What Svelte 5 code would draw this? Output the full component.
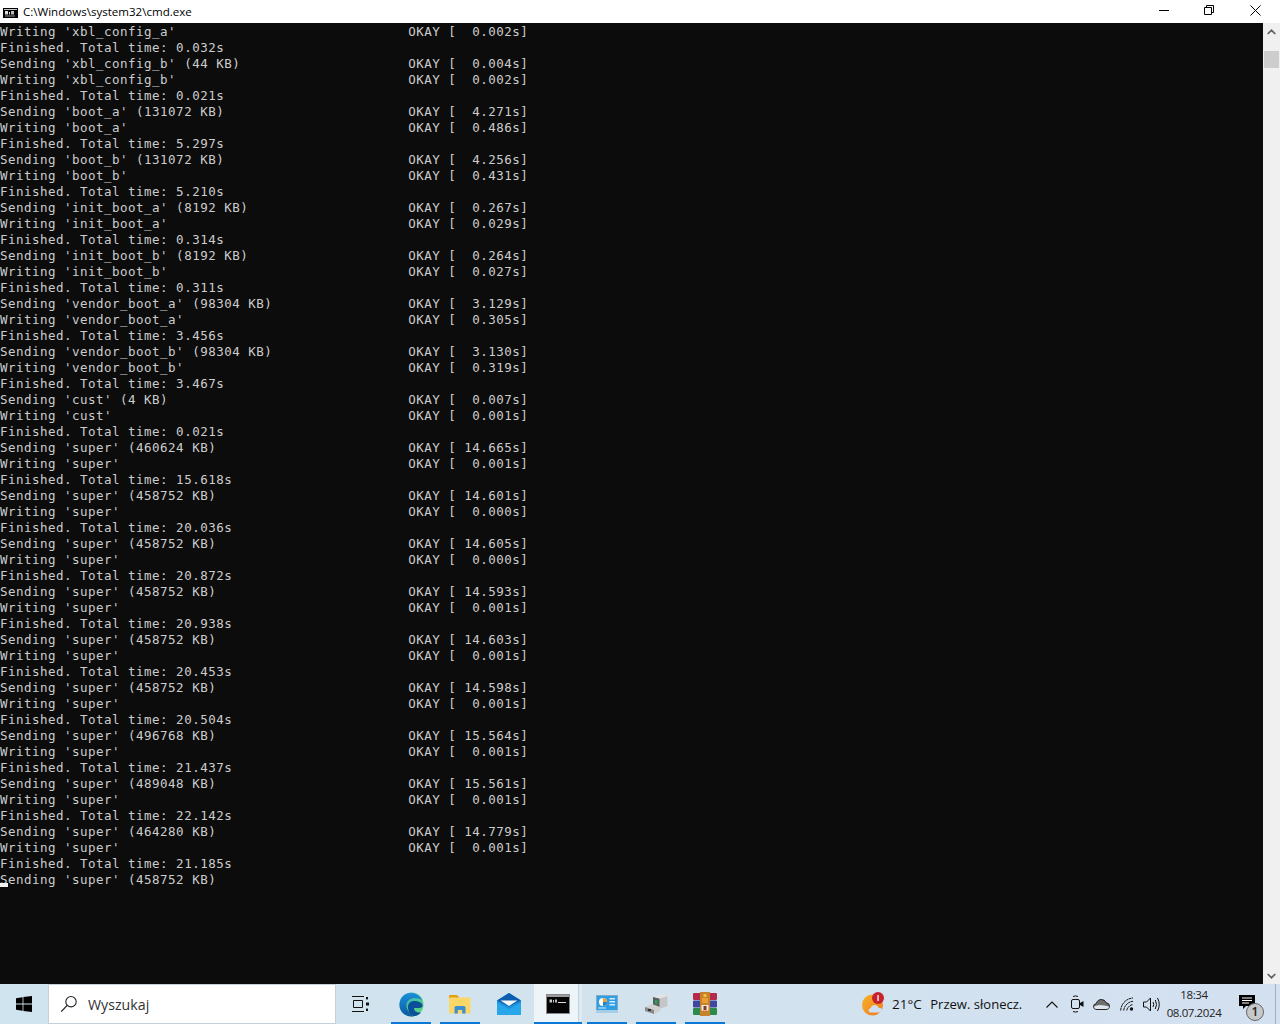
<script>
  const S = (name, kb, t) => [`Sending '${name}' (${kb} KB)`, t];
  const W = (name, t) => [`Writing '${name}'`, t];
  const F = (t) => [`Finished. Total time: ${t}s`];
  const rows = [
    W('xbl_config_a', ' 0.002'), F('0.032'),
    S('xbl_config_b', 44, ' 0.004'), W('xbl_config_b', ' 0.002'), F('0.021'),
    S('boot_a', 131072, ' 4.271'), W('boot_a', ' 0.486'), F('5.297'),
    S('boot_b', 131072, ' 4.256'), W('boot_b', ' 0.431'), F('5.210'),
    S('init_boot_a', 8192, ' 0.267'), W('init_boot_a', ' 0.029'), F('0.314'),
    S('init_boot_b', 8192, ' 0.264'), W('init_boot_b', ' 0.027'), F('0.311'),
    S('vendor_boot_a', 98304, ' 3.129'), W('vendor_boot_a', ' 0.305'), F('3.456'),
    S('vendor_boot_b', 98304, ' 3.130'), W('vendor_boot_b', ' 0.319'), F('3.467'),
    S('cust', 4, ' 0.007'), W('cust', ' 0.001'), F('0.021'),
    S('super', 460624, '14.665'), W('super', ' 0.001'), F('15.618'),
    S('super', 458752, '14.601'), W('super', ' 0.000'), F('20.036'),
    S('super', 458752, '14.605'), W('super', ' 0.000'), F('20.872'),
    S('super', 458752, '14.593'), W('super', ' 0.001'), F('20.938'),
    S('super', 458752, '14.603'), W('super', ' 0.001'), F('20.453'),
    S('super', 458752, '14.598'), W('super', ' 0.001'), F('20.504'),
    S('super', 496768, '15.564'), W('super', ' 0.001'), F('21.437'),
    S('super', 489048, '15.561'), W('super', ' 0.001'), F('22.142'),
    S('super', 464280, '14.779'), W('super', ' 0.001'), F('21.185'),
  ];
  const lines = rows.map(([l, t]) => (t ? l.padEnd(51, ' ') + `OKAY [ ${t}s]` : l));
</script>

<div class="window">
  <header class="titlebar">
    <svg class="appicon" width="15" height="10" viewBox="0 0 15 10">
      <rect width="15" height="10" fill="#000"/>
      <rect x="1" y="1" width="13" height="1" fill="#c8c8c8"/>
      <rect x="2" y="3" width="3" height="3.500" fill="#ddd"/>
      <rect x="6" y="4" width="1" height="2.500" fill="#ddd"/>
      <rect x="8" y="3" width="3" height="3.500" fill="#bbb"/>
      <rect x="2" y="7.500" width="10" height="1" fill="#999"/>
    </svg>
    <span class="title">C:\Windows\system32\cmd.exe</span>
    <div class="controls">
      <button class="ctl" aria-label="Minimize"><svg width="10" height="10" viewBox="0 0 10 10"><path d="M0 5.500h10" stroke="#000" fill="none"/></svg></button>
      <button class="ctl narrow" aria-label="Restore"><svg width="10" height="10" viewBox="0 0 10 10"><path d="M2.500 2.500V.5h7v7h-2M.5 2.500h7v7h-7z" stroke="#000" fill="none"/></svg></button>
      <button class="ctl" aria-label="Close"><svg width="11" height="11" viewBox="0 0 11 11"><path d="M.5.5l10 10M10.500.5l-10 10" stroke="#000" fill="none"/></svg></button>
    </div>
  </header>

  <main class="body">
    <div class="console">
      {#each lines as line}
        <div class="line">{line}</div>
      {/each}
      <div class="line current">Sending 'super' (458752 KB)<span class="cursor"></span></div>
    </div>
    <div class="scrollbar">
      <div class="arrow"><svg width="9" height="6" viewBox="0 0 9 6"><path d="M.7 5L4.500 1.300 8.300 5" stroke="#606060" stroke-width="1.700" fill="none"/></svg></div>
      <div class="thumb"></div>
      <div class="arrow bottom"><svg width="9" height="6" viewBox="0 0 9 6"><path d="M.7 1L4.500 4.700 8.300 1" stroke="#606060" stroke-width="1.700" fill="none"/></svg></div>
    </div>
  </main>

  <footer class="taskbar">
    <div class="start">
      <svg width="16" height="16" viewBox="0 0 16 16"><path fill="#000" d="M0 2.200L6.600 1.200V7.600H0zM7.400 1.100L16 0V7.600H7.400zM0 8.400H6.600V14.800L0 13.800zM7.400 8.400H16V16L7.400 14.900z"/></svg>
    </div>
    <div class="search">
      <svg width="18" height="18" viewBox="0 0 18 18"><circle cx="11" cy="6.700" r="5.200" fill="none" stroke="#222" stroke-width="1.100"/><path d="M7.200 10.400L1.200 16.600" stroke="#222" stroke-width="1.300"/></svg>
      <span>Wyszukaj</span>
    </div>
    <div class="taskview">
      <svg width="17" height="16" viewBox="0 0 17 16"><path d="M0 .5h12M0 15.500h12M1.500 4.500h9v7h-9z" fill="none" stroke="#111"/><rect x="14" y="1" width="2" height="2.400" fill="#111"/><rect x="14" y="6.500" width="3" height="3" fill="#111"/><rect x="14" y="12.600" width="2" height="2.400" fill="#111"/></svg>
    </div>
    <div class="apps">
      <div class="slot run">
        <svg width="25" height="25" viewBox="0 0 25 25">
          <defs>
            <linearGradient id="eg" x1="0" y1="0" x2="1" y2="1"><stop offset="0" stop-color="#2fa8d8"/><stop offset="1" stop-color="#62dc6c"/></linearGradient>
            <linearGradient id="eb" x1="0" y1="0" x2="0" y2="1"><stop offset="0" stop-color="#1a8fd8"/><stop offset="1" stop-color="#0c59a4"/></linearGradient>
          </defs>
          <circle cx="12.500" cy="12.500" r="12" fill="url(#eg)"/>
          <path d="M.5 12.500C1 5 6 1 12 1c5 0 9 3 11 7-3-2-9-3-13 0-4 3-3 8 0 12 1 2 3 4 5 4.300-8 1.500-15-4-14.500-12z" fill="url(#eb)"/>
          <path d="M9 15c0-4 3-6 6.500-6 3.500 0 8 1.500 8 4.500 0 1.800-1.500 2.500-3.500 2.500h-5c0 3 2.500 5 7 4.500-2 2.500-5 4-7.500 3.500C11 23 9 19 9 15z" fill="#0a4f97"/>
        </svg>
      </div>
      <div class="slot run">
        <svg width="22" height="20" viewBox="0 0 22 20">
          <path d="M0 2q0-1 1-1h7l2 2v3H0z" fill="#e0a012"/>
          <rect y="3.500" width="21.500" height="16" rx="1" fill="#fbd768"/>
          <path d="M5.500 19.500v-6q0-1.500 1.500-1.500h8q1.500 0 1.500 1.500v6h-3.300v-3.500H8.800v3.500z" fill="#3f8fd0"/>
        </svg>
      </div>
      <div class="slot">
        <svg width="24" height="23" viewBox="0 0 24 23">
          <path d="M12 0L24 7.500V22H0V7.500z" fill="#1d8fdb"/>
          <path d="M12 0L24 7.500l-12 6-12-6z" fill="#0b5fae"/>
          <path d="M3.500 7.500h17L12 13z" fill="#f4f8fb"/>
          <path d="M0 9.500l12 6.500 12-6.500V22H0z" fill="#27a6ea"/>
        </svg>
      </div>
      <div class="slot run active">
        <svg width="24" height="20" viewBox="0 0 24 20">
          <rect x=".5" y=".5" width="23" height="19" fill="#050505" stroke="#888"/>
          <rect x="1" y="1" width="22" height="2" fill="#9c9c9c"/>
          <rect x="3.500" y="5.500" width="2.500" height="3" fill="#ccc"/>
          <rect x="7" y="6" width="1" height="2.500" fill="#ccc"/>
          <rect x="9" y="5.500" width="2" height="3" fill="#bbb"/>
          <rect x="12" y="8" width="8" height="1" fill="#ddd"/>
        </svg>
      </div>
      <div class="slot run">
        <svg width="22" height="18" viewBox="0 0 22 18">
          <rect x=".5" y=".5" width="21" height="15" fill="#2f9fe4" stroke="#7fa9c8"/>
          <rect y="15" width="22" height="3" fill="#a6cfe6"/>
          <circle cx="7" cy="7" r="4" fill="#fff"/>
          <path d="M7 7V3a4 4 0 0 1 4 4z" fill="#f0a030"/>
          <path d="M7 7h4a4 4 0 0 1-4 4z" fill="#2f7fc4"/>
          <rect x="13.500" y="3" width="5.500" height="1.500" fill="#d8ecf8"/>
          <rect x="13.500" y="6" width="5.500" height="1.500" fill="#d8ecf8"/>
          <rect x="13.500" y="9" width="5.500" height="1.500" fill="#d8ecf8"/>
          <rect x="2" y="12.500" width="8" height="1" fill="#d8ecf8"/>
        </svg>
      </div>
      <div class="slot run">
        <svg width="23" height="20" viewBox="0 0 23 20">
          <path d="M8 3l10-3 4.500 2v10l-8 3z" fill="#e3e3e3"/>
          <path d="M8 3l7 1.800V15L8 13z" fill="#5a5f60"/>
          <path d="M14.500 4.500L22.500 2v10l-8 3z" fill="#c6c6c6"/>
          <rect x="10" y="6" width="2.500" height="4" fill="#2aa050"/>
          <path d="M0 13l7-3 8 3v4l-6 3-9-3z" fill="#d0d0d0"/>
          <path d="M0 13l9 3v4l-9-3z" fill="#8a8a8a"/>
          <rect x="3" y="15" width="3" height="2" fill="#333"/>
        </svg>
      </div>
      <div class="slot run">
        <svg width="24" height="24" viewBox="0 0 24 24">
          <rect x="0" y="1" width="24" height="7" rx="1" fill="#b32a4a"/>
          <rect x="0" y="8.500" width="24" height="7" rx="1" fill="#3f48a0"/>
          <rect x="0" y="16" width="24" height="7" rx="1" fill="#2c8a4a"/>
          <rect x="7" y="0" width="10" height="24" fill="#c8812c"/>
          <rect x="9" y="6" width="6" height="5" fill="#e8a030"/>
          <rect x="8.500" y="13" width="7" height="5.500" fill="#f0ece6"/>
          <rect x="10.500" y="14" width="3" height="4" fill="#8a3a20"/>
          <rect x="10.500" y="2" width="3" height="3" fill="#f0c040"/>
        </svg>
      </div>
    </div>
    <div class="spacer"></div>
    <div class="weather">
      <svg width="24" height="24" viewBox="0 0 24 24">
        <defs><linearGradient id="sun" x1="0" y1="0" x2="1" y2="1"><stop offset="0" stop-color="#f8b32a"/><stop offset="1" stop-color="#ee7a1c"/></linearGradient></defs>
        <circle cx="10.500" cy="13" r="10.500" fill="url(#sun)"/>
        <path d="M9 20.500q-2.500 0-2.500-2.200 0-2 2.300-2.200.8-3 3.800-3 3 0 3.900 2.700 3.500 0 3.500 2.400 0 2.300-3 2.300z" fill="#cfe0f4"/>
        <circle cx="16" cy="6" r="6" fill="#c8202c"/>
        <rect x="15.400" y="3" width="1.300" height="6" fill="#fff"/>
      </svg>
      <span class="temp">21°C</span>
      <span class="cond">Przew. słonecz.</span>
    </div>
    <div class="tray">
      <div class="ti"><svg width="12" height="7" viewBox="0 0 12 7"><path d="M.5 6.500L6 1l5.500 5.500" fill="none" stroke="#111" stroke-width="1.100"/></svg></div>
      <div class="ti"><svg width="13" height="18" viewBox="0 0 13 18"><path d="M2 1.500Q4.500.3 7 1.500M2 16.500q2.500 1.200 5 0" fill="none" stroke="#111"/><rect x=".5" y="4.500" width="8" height="9" rx="1.500" fill="none" stroke="#111"/><path d="M9 8l3.500-2v6L9 10z" fill="#111"/></svg></div>
      <div class="ti"><svg width="17" height="11" viewBox="0 0 17 11"><path d="M4 10.500Q.5 10.500.5 7.500 .5 5 3.200 4.700 4.500.5 8.500.5q3.500 0 4.500 3.200 3.500.3 3.500 3.500 0 3.300-3.500 3.300z" fill="#6e6e6e" stroke="#222"/><path d="M1 7.500q5-3 15 0 0 2.500-3 2.500H4Q1 10 1 7.500z" fill="#e0e6ee"/></svg></div>
      <div class="ti"><svg width="14" height="14" viewBox="0 0 14 14"><path d="M.7 13.500C1 7 6 1.500 13 1M3.700 13.500C4 9 8 4.700 13 4.300M6.800 13.500C7 11 9.500 8 13 7.500" fill="none" stroke="#111" stroke-width="1" stroke-dasharray="2.500 .5"/><circle cx="11.500" cy="12" r="1.700" fill="#111"/></svg></div>
      <div class="ti"><svg width="17" height="15" viewBox="0 0 17 15"><path d="M.5 5h3l4-4v13l-4-4h-3z" fill="none" stroke="#111"/><path d="M10 5q1.500 2.500 0 5M12.300 3q2.500 4.500 0 9M14.500 1q3.500 6.500 0 13" fill="none" stroke="#111"/></svg></div>
    </div>
    <div class="clock"><span>18:34</span><span>08.07.2024</span></div>
    <div class="notif">
      <svg width="16" height="14" viewBox="0 0 16 14"><path d="M0 0h16v11H7l-3 3v-3H0z" fill="#000"/><path d="M3 3h10M3 5.500h10M3 8h7" stroke="#fff"/></svg>
      <span class="badge">1</span>
    </div>
    <div class="desk"></div>
  </footer>
</div>

<style>
  :global(body) { margin: 0; background: #0c0c0c; overflow: hidden; }
  .window { width: 1280px; height: 1024px; display: flex; flex-direction: column; overflow: hidden; }
  .titlebar { height: 23px; background: #fff; display: flex; align-items: center; flex: none; }
  .appicon { margin-left: 3px; margin-right: 5px; margin-top: 2px; }
  .title { font: 11.55px "Open Sans", sans-serif; color: #000; }
  .controls { margin-left: auto; display: flex; height: 23px; margin-right: 2px; }
  .ctl { width: 46px; height: 23px; border: 0; padding: 0 0 3px; background: none; display: flex; align-items: center; justify-content: center; }
  .ctl.narrow { width: 45px; padding-right: 1px; }
  .body { flex: 1; display: flex; min-height: 0; background: #0c0c0c; }
  .console { flex: 1; padding-top: 1px; font-family: "DejaVu Sans Mono", monospace; font-size: 12.5px; letter-spacing: .48px; color: #cccccc; }
  .line { height: 16px; line-height: 16px; white-space: pre; position: relative; }
  .cursor { position: absolute; left: 0; top: 11px; width: 8px; height: 4px; background: #f2f2f2; }
  .scrollbar { width: 17px; background: #f0f0f0; display: flex; flex-direction: column; align-items: center; }
  .arrow { height: 17px; width: 17px; display: flex; align-items: center; justify-content: center; flex: none; }
  .arrow.bottom { margin-top: auto; }
  .thumb { width: 15px; height: 17px; margin-top: 11px; background: #cdcdcd; }
  .taskbar { height: 40px; flex: none; display: flex; align-items: stretch; background: linear-gradient(90deg, #cfe4ee 0%, #d2e3ee 45%, #d3e0f0 100%); font-family: "Open Sans", sans-serif; color: #111; }
  .start { width: 48px; display: flex; align-items: center; justify-content: center; }
  .search { width: 288px; box-sizing: border-box; background: #fff; border: 1px solid #c4cfd6; display: flex; align-items: center; padding-left: 11px; gap: 10px; font-size: 14.200px; color: #333; }
  .taskview { width: 48px; display: flex; align-items: center; justify-content: center; }
  .apps { display: flex; margin-left: 2.500px; }
  .slot { width: 49px; display: flex; align-items: center; justify-content: center; box-sizing: border-box; position: relative; }
  .slot.run::after { content: ""; position: absolute; left: 4.500px; right: 4.500px; bottom: 0; height: 2px; background: #0a78d4; }
  .slot.active { background: linear-gradient(90deg, #eef5f9 44px, #bfd3de 44px, #bfd3de 45px, #deeaf1 45px); width: 48px; margin: 0 .5px; }
  .slot.active::after { left: 0; right: 0; }
  .spacer { flex: 1; }
  .weather { display: flex; align-items: center; font-size: 13.500px; width: 178px; box-sizing: border-box; }
  .temp { margin-left: 6px; }
  .cond { margin-left: 8.500px; font-size: 13.050px; }
  .tray { display: flex; width: 124px; }
  .ti { flex: 1; display: flex; align-items: center; justify-content: center; }
  .clock { width: 60px; display: flex; flex-direction: column; align-items: center; justify-content: center; font-size: 11.500px; letter-spacing: -.4px; line-height: 18px; color: #222; white-space: nowrap; }
  .notif { width: 51px; box-sizing: border-box; padding-left: 15px; display: flex; align-items: center; position: relative; }
  .notif svg { margin-bottom: 4px; }
  .badge { position: absolute; left: 22px; top: 19px; width: 16px; height: 16px; border-radius: 50%; border: 1px solid #666; background: #c6c8c9; font-size: 12px; line-height: 16px; text-align: center; color: #222; font-weight: 600; }
  .desk { width: 4px; border-left: 1px solid #9fb0bd; flex: none; }
</style>
